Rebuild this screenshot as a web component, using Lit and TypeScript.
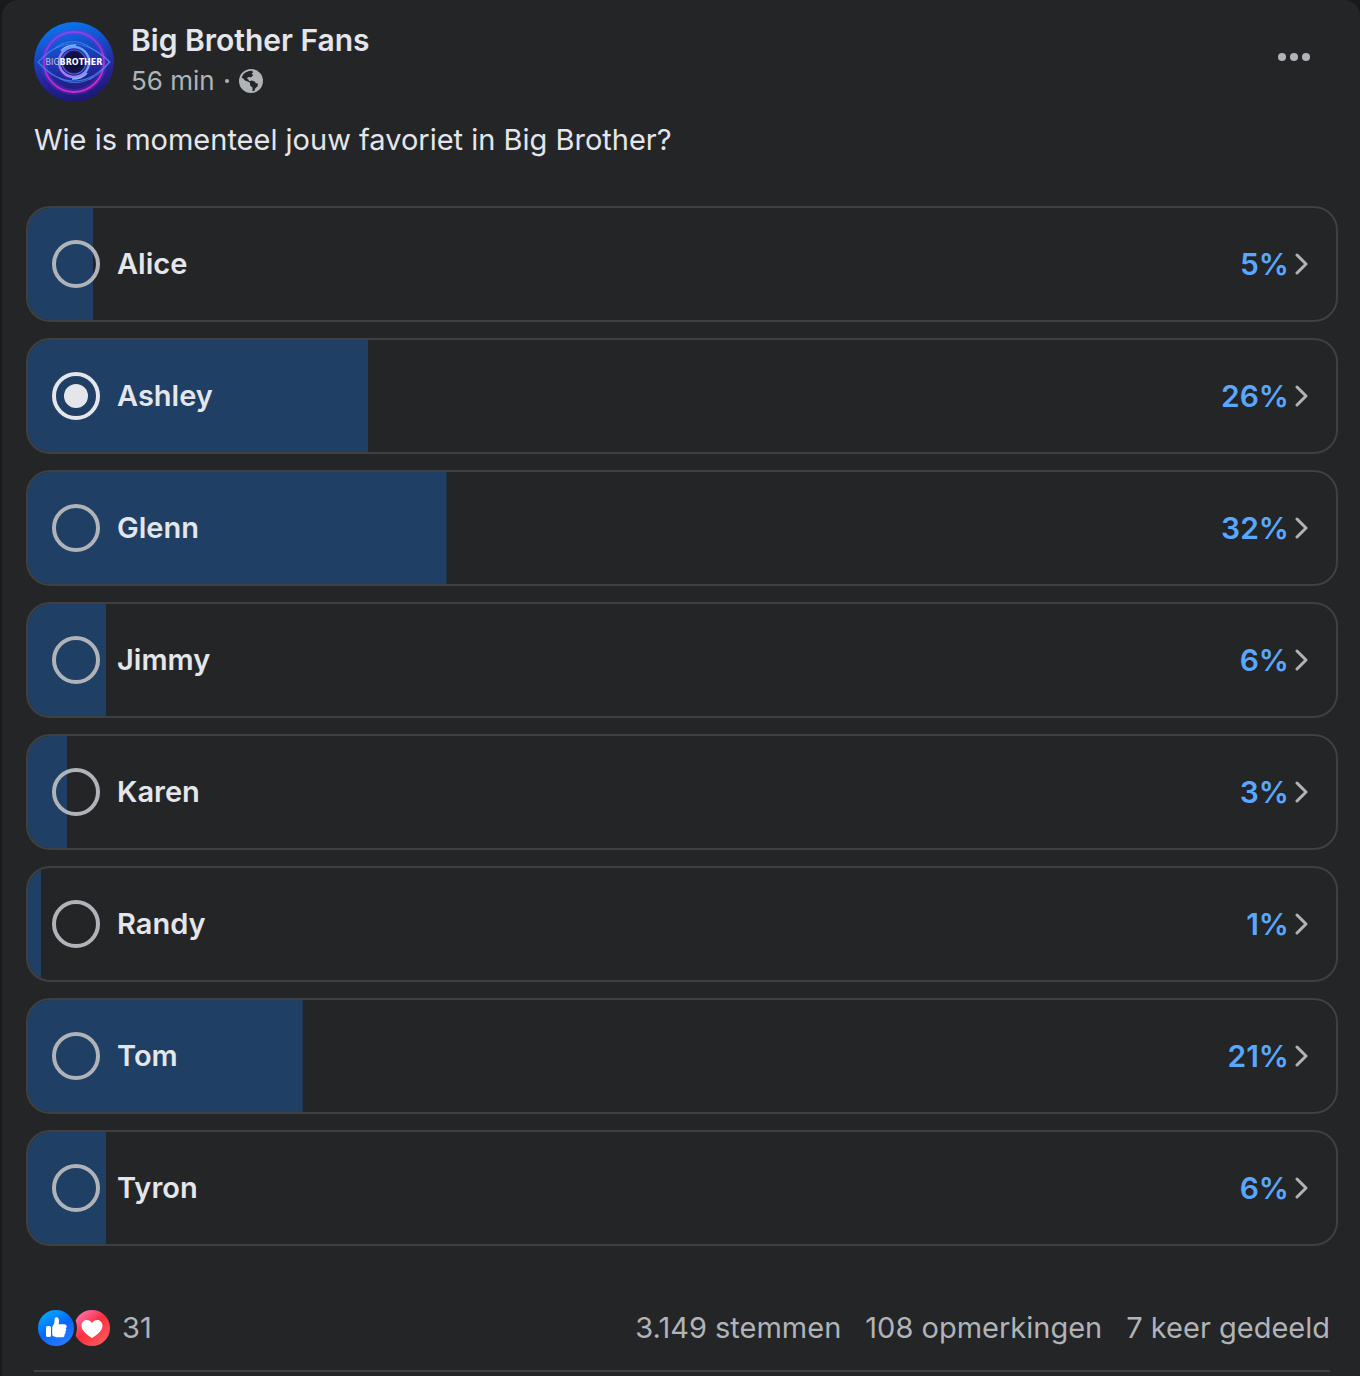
import { LitElement, html, css } from "lit";
import { customElement, property, state } from "lit/decorators.js";
import { styleMap } from "lit/directives/style-map.js";

interface Choice {
  name: string;
  share: number;
}

const CHOICES: Choice[] = [
  { name: "Alice", share: 5 },
  { name: "Ashley", share: 26 },
  { name: "Glenn", share: 32 },
  { name: "Jimmy", share: 6 },
  { name: "Karen", share: 3 },
  { name: "Randy", share: 1 },
  { name: "Tom", share: 21 },
  { name: "Tyron", share: 6 },
];

@customElement("page-avatar")
export class PageAvatar extends LitElement {
  static styles = css`
    :host {
      display: block;
      flex: none;
    }
    .picture {
      display: block;
      width: 80px;
      height: 80px;
    }
    .mark {
      font-family: "DejaVu Sans", sans-serif;
      font-size: 8px;
      font-weight: 700;
      fill: #fff;
    }
    .thin {
      font-weight: 400;
      fill: #b9c6ee;
    }
  `;

  render() {
    return html`
      <svg class="picture" viewBox="0 0 80 80" role="img" aria-label="Big Brother Fans">
        <defs>
          <linearGradient id="sky" x1="0.35" y1="0" x2="0.6" y2="1">
            <stop offset="0" stop-color="#0878f0" />
            <stop offset="0.3" stop-color="#1450cc" />
            <stop offset="0.65" stop-color="#26249a" />
            <stop offset="1" stop-color="#1c186e" />
          </linearGradient>
          <radialGradient id="pupil">
            <stop offset="0" stop-color="#0a0b35" />
            <stop offset="0.5" stop-color="#10124c" />
            <stop offset="0.8" stop-color="#2434a8" stop-opacity="0.8" />
            <stop offset="1" stop-color="#2a3bd0" stop-opacity="0" />
          </radialGradient>
          <linearGradient id="neon" x1="0" y1="0" x2="0.3" y2="1">
            <stop offset="0" stop-color="#7a4cf0" />
            <stop offset="0.5" stop-color="#a030d8" />
            <stop offset="1" stop-color="#d02cc8" />
          </linearGradient>
          <linearGradient id="iris" x1="0" y1="1" x2="1" y2="0">
            <stop offset="0" stop-color="#c070f0" />
            <stop offset="1" stop-color="#4ab4ff" />
          </linearGradient>
          <clipPath id="disc"><circle cx="40" cy="40" r="40" /></clipPath>
        </defs>
        <g clip-path="url(#disc)" fill="none">
          <rect width="80" height="80" fill="url(#sky)" />
          <circle cx="40" cy="40" r="30" stroke="#8a2be2" stroke-width="6" opacity="0.3" />
          <circle cx="40" cy="40" r="30" stroke="url(#neon)" stroke-width="1.8" />
          <path d="M4 40C14 30 24 22 38 22c16 0 28 8 38 18-10 10-20 19-36 19C25 59 13 50 4 40Z" stroke="#3f8cf0" stroke-width="1.2" opacity="0.8" />
          <path d="M20 27C30 18 45 17 57 26c9 6 15 10 18 14-4 7-12 14-20 18M60 54C50 62 36 63 25 56" stroke="#5a9cf8" stroke-width="0.9" opacity="0.7" />
          <circle cx="40" cy="40" r="19" fill="url(#pupil)" />
          <circle cx="40" cy="40" r="15" stroke="url(#iris)" stroke-width="2.4" />
          <circle cx="40" cy="40" r="12" stroke="#5a58e0" stroke-width="1.2" />
          <path d="M27 29c4-5 9-6 15-6M53 51c-4 5-9 6-15 6" stroke="#82b8ff" stroke-width="1.5" />
        </g>
        <text class="mark" x="40" y="43" text-anchor="middle"><tspan class="thin">BIG</tspan>BROTHER</text>
      </svg>
    `;
  }
}

@customElement("poll-choice")
export class PollChoice extends LitElement {
  @property({ type: String }) name = "";
  @property({ type: Number }) share = 0;
  @property({ type: Boolean }) selected = false;

  static styles = css`
    :host {
      display: block;
    }
    .row {
      display: flex;
      align-items: center;
      justify-content: space-between;
      padding: 32px 28px 32px 24px;
      border: 2px solid #3e4042;
      border-radius: 24px;
      background: linear-gradient(#1f3f64, #1f3f64) no-repeat 0 0 / var(--share) 100% padding-box;
    }
    .choice {
      display: flex;
      flex: 1;
      align-items: center;
      gap: 17px;
      color: #e4e6eb;
      cursor: pointer;
    }
    .radio {
      appearance: none;
      flex: none;
      width: 48px;
      height: 48px;
      margin: 0;
      border: 4px solid #b0b3b8;
      border-radius: 50%;
      cursor: pointer;
    }
    .radio:checked {
      display: grid;
      place-items: center;
      border-color: #e4e6eb;
    }
    .radio:checked::before {
      content: "";
      width: 24px;
      height: 24px;
      border-radius: 50%;
      background: #e4e6eb;
    }
    .result {
      display: flex;
      align-items: center;
      gap: 6px;
      padding: 0;
      border: 0;
      background: none;
      color: #5aa7ff;
      font: inherit;
      font-size: 30px;
      cursor: pointer;
    }
    .chevron {
      display: block;
      width: 13px;
      height: 22px;
    }
  `;

  private pick() {
    this.dispatchEvent(new CustomEvent("pick", { detail: this.name }));
  }

  render() {
    return html`
      <div class="row" style=${styleMap({ "--share": `${this.share}%` })}>
        <label class="choice" for="option">
          <input
            class="radio"
            id="option"
            type="radio"
            name="favourite"
            .checked=${this.selected}
            @change=${this.pick}
          />
          <span>${this.name}</span>
        </label>
        <button class="result" type="button">
          <span>${this.share}%</span>
          <svg class="chevron" viewBox="0 0 13 22" aria-hidden="true">
            <path d="M2 2l9 9-9 9" fill="none" stroke="#b0b3b8" stroke-width="3" stroke-linecap="round" stroke-linejoin="round" />
          </svg>
        </button>
      </div>
    `;
  }
}

@customElement("app-root")
export class AppRoot extends LitElement {
  @state() private favourite = "Ashley";

  static styles = css`
    :host {
      display: block;
      min-height: 100vh;
      box-sizing: border-box;
      padding-left: 2px;
      background: #18191a;
      color: #e4e6eb;
      font-family: Inter, "Liberation Sans", sans-serif;
      font-size: 29px;
      line-height: 40px;
    }
    .card {
      min-height: 100vh;
      box-sizing: border-box;
      padding: 20px 22px 4px 24px;
      border-radius: 16px 16px 0 0;
      background: #242526;
    }
    .header {
      display: flex;
      align-items: flex-end;
      gap: 17px;
      padding: 0 20px 0 8px;
    }
    .about {
      flex: 1;
    }
    .title {
      margin: 0;
      font-size: 30px;
      font-weight: 600;
    }
    .author {
      color: inherit;
      text-decoration: none;
    }
    .meta {
      display: flex;
      align-items: center;
      gap: 10px;
      color: #b0b3b8;
      font-size: 26px;
      line-height: 42px;
    }
    .dot {
      display: block;
      width: 4px;
      height: 4px;
      border-radius: 50%;
      background: #b0b3b8;
    }
    .globe {
      display: block;
      width: 24px;
      height: 24px;
    }
    .more {
      align-self: flex-start;
      margin-top: 21px;
      padding: 8px;
      border: 0;
      background: none;
      cursor: pointer;
    }
    .dots {
      display: block;
      width: 32px;
      height: 16px;
    }
    .question {
      margin: 0;
      padding: 18px 8px 46px;
    }
    .poll {
      display: grid;
      gap: 16px;
      margin: 0;
      padding: 0;
      border: 0;
      font-weight: 600;
    }
    .footer {
      display: flex;
      justify-content: space-between;
      align-items: center;
      margin: 0 8px;
      padding: 62px 0 22px;
      border-bottom: 2px solid #3e4042;
      color: #b0b3b8;
    }
    .reactions {
      display: flex;
      align-items: center;
      gap: 12px;
      padding: 0 0 0 4px;
      border: 0;
      background: none;
      color: inherit;
      font: inherit;
      cursor: pointer;
    }
    .faces {
      display: block;
      width: 72px;
      height: 36px;
    }
    .counts {
      display: flex;
      gap: 24px;
    }
    .count {
      color: inherit;
      text-decoration: none;
    }
  `;

  render() {
    return html`
      <article class="card">
        <header class="header">
          <page-avatar></page-avatar>
          <div class="about">
            <h2 class="title"><a class="author" href="#">Big Brother Fans</a></h2>
            <div class="meta">
              <span>56 min</span>
              <span class="dot"></span>
              <svg class="globe" viewBox="0 0 24 24" role="img" aria-label="Openbaar">
                <circle cx="12" cy="12" r="12" fill="#b0b3b8" />
                <path d="M4.500 5C6.500 3 9.500 1.700 13 1.800L14.200 3.200 12.600 4.400 14.200 6.200 12 8.600 10.600 8 8.800 8.200 8 9.600 9.400 10.600 10.200 12.200 12.600 11.600 15.800 12.400 16.600 14 19 14.800 18.600 17.200 16.400 19.200 15.200 22H13.400L13.600 18.800 11.200 16.600 11 13.800 8.600 12.600 6 11.600 4.200 9.400 2.600 8.600Z" fill="#242526" />
              </svg>
            </div>
          </div>
          <button class="more" type="button" aria-label="Meer">
            <svg class="dots" viewBox="0 0 32 16" aria-hidden="true">
              <g fill="#b0b3b8">
                <circle cx="4" cy="8" r="4" />
                <circle cx="16" cy="8" r="4" />
                <circle cx="28" cy="8" r="4" />
              </g>
            </svg>
          </button>
        </header>

        <p class="question">Wie is momenteel jouw favoriet in Big Brother?</p>

        <fieldset class="poll" aria-label="Poll">
          ${CHOICES.map(
            (choice) => html`
              <poll-choice
                .name=${choice.name}
                .share=${choice.share}
                .selected=${choice.name === this.favourite}
                @pick=${(event: CustomEvent<string>) => (this.favourite = event.detail)}
              ></poll-choice>
            `,
          )}
        </fieldset>

        <footer class="footer">
          <button class="reactions" type="button">
            <svg class="faces" viewBox="0 0 72 36" aria-hidden="true">
              <defs>
                <linearGradient id="like" x1="0.2" y1="0" x2="0.8" y2="1">
                  <stop offset="0" stop-color="#02adfc" />
                  <stop offset="0.5" stop-color="#0866ff" />
                  <stop offset="1" stop-color="#2b7eff" />
                </linearGradient>
                <linearGradient id="love" x1="0.1" y1="0.1" x2="0.8" y2="0.9">
                  <stop offset="0" stop-color="#ff74ae" />
                  <stop offset="0.5" stop-color="#fa2e3e" />
                  <stop offset="1" stop-color="#ff5758" />
                </linearGradient>
              </defs>
              <circle cx="54" cy="18" r="18" fill="url(#love)" />
              <circle cx="18" cy="18" r="21" fill="#242526" />
              <circle cx="18" cy="18" r="18" fill="url(#like)" />
              <rect x="8" y="16" width="5" height="11" rx="1.600" fill="#fff" />
              <path d="M14.200 17.500c0-1 .5-1.700 1.100-2.600.9-1.300 1.200-2.700 1.200-5 0-1.400.5-2.700 2-2.700 1.900 0 2.500 2 2.500 4 0 1.200-.2 2.200-.4 3.100h5.600c1.500 0 2.500 1 2.500 2.200 0 .9-.4 1.500-1 1.900.5.400.7 1 .6 1.700-.1.700-.5 1.200-1.100 1.500.4.400.5 1 .4 1.500-.2.700-.6 1.100-1.200 1.400.2.400.2.800.1 1.200-.3 1-1.200 1.500-2.500 1.500h-4.500c-2.500 0-5.300-.7-5.300-3Z" fill="#fff" />
              <path d="M54 28c-2.500-1.500-10.500-6.500-10.500-12.300 0-3.200 2.200-5.700 5.200-5.700 2.300 0 4.200 1.100 5.300 3 1.100-1.900 3-3 5.300-3 3 0 5.200 2.500 5.200 5.700C64.500 21.500 56.500 26.500 54 28Z" fill="#fff" />
            </svg>
            <span>31</span>
          </button>
          <nav class="counts" aria-label="Statistieken">
            <a class="count" href="#">3.149 stemmen</a>
            <a class="count" href="#">108 opmerkingen</a>
            <a class="count" href="#">7 keer gedeeld</a>
          </nav>
        </footer>
      </article>
    `;
  }
}
